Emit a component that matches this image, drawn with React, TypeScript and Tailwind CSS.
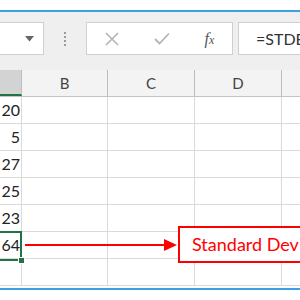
import React from "react";

const COLS = [
  { key: "A", w: "w-[22px]" },
  { key: "B", w: "w-[86px]" },
  { key: "C", w: "w-[87px]" },
  { key: "D", w: "w-[87px]" },
  { key: "E", w: "w-[87px]" },
];

const VALUES = ["20", "5", "27", "25", "23", "64", ""];

const FONT = { fontFamily: "Lato, 'Liberation Sans', sans-serif" };

const App = () => {
  return (
    <div className="relative w-[300px] h-[300px] overflow-hidden bg-white" style={FONT}>
      <div className="h-[10px] bg-white" />
      <div className="h-[2px] bg-[#3ba1e3]" />

      {/* formula toolbar */}
      <div className="h-[58px] bg-[#efefef] pt-[10px] flex">
        <div className="w-[44px] h-[33px] bg-white border border-l-0 border-[#cfcfcf] flex items-center justify-end pr-[9px]">
          <svg width="9" height="6" viewBox="0 0 9 6">
            <path d="M0 0 L9 0 L4.5 5.5 Z" fill="#666" />
          </svg>
        </div>
        <div className="w-[42px] h-[33px] flex flex-col items-center justify-center gap-[2px]">
          <span className="w-[2px] h-[2px] bg-[#9a9a9a]" />
          <span className="w-[2px] h-[2px] bg-[#9a9a9a]" />
          <span className="w-[2px] h-[2px] bg-[#9a9a9a]" />
          <span className="w-[2px] h-[2px] bg-[#9a9a9a]" />
        </div>
        <div className="w-[147px] h-[33px] bg-white border border-[#cfcfcf] flex items-center">
          <div className="w-[50px] flex justify-center">
            <svg width="14" height="14" viewBox="0 0 14 14">
              <path d="M1 1 L13 13 M13 1 L1 13" stroke="#b4b4b4" strokeWidth="1.6" />
            </svg>
          </div>
          <div className="w-[50px] flex justify-center">
            <svg width="16" height="13" viewBox="0 0 16 13">
              <path d="M1 7 L5.5 11.5 L15 1.5" stroke="#b4b4b4" strokeWidth="1.8" fill="none" />
            </svg>
          </div>
          <div className="w-[45px] flex justify-center">
            <span className="text-[16px] italic text-[#555] leading-none" style={{ fontFamily: "'Liberation Serif', serif" }}>
              f<span className="text-[12px]">x</span>
            </span>
          </div>
        </div>
        <div className="w-[5px]" />
        <div className="flex-1 h-[33px] bg-white border border-r-0 border-[#cfcfcf] flex items-center pl-[17px] text-[16px] text-[#333] whitespace-nowrap overflow-hidden">
          =STDEV.S(A1:A5)
        </div>
      </div>

      {/* column headers */}
      <div className="h-[27px] flex bg-[#f3f3f3] border-b border-[#c4c4c4]">
        {COLS.map((c) => (
          <div
            key={c.key}
            className={`${c.w} shrink-0 h-full flex items-center justify-center text-[15px] text-[#444] border-r border-[#bdbdbd] ${
              c.key === "A" ? "bg-[#d3d3d3] border-b-2 border-b-[#217346]" : ""
            }`}
          >
            {c.key === "A" ? "" : c.key}
          </div>
        ))}
      </div>

      {/* rows */}
      {VALUES.map((v, i) => (
        <div key={i} className="h-[27px] flex">
          {COLS.map((c) => (
            <div
              key={c.key}
              className={`${c.w} shrink-0 h-full border-r border-b border-[#dadada] flex items-center ${
                c.key === "A" ? "justify-end pr-[1px] text-[16px] text-[#222]" : ""
              }`}
            >
              {c.key === "A" ? v : ""}
            </div>
          ))}
        </div>
      ))}

      <div className="absolute left-0 top-[288px] w-full h-[2px] bg-[#3ba1e3]" />

      {/* selected cell */}
      <div className="absolute left-[-4px] top-[231px] w-[26px] h-[30px] border-2 border-[#217346]" />
      <div className="absolute left-[18px] top-[257px] w-[7px] h-[7px] bg-[#217346] border border-white" />

      {/* arrow */}
      <div className="absolute left-[25px] top-[244px] w-[145px] h-[2px] bg-[#f00]" />
      <svg className="absolute left-[164px] top-[239px]" width="13" height="12" viewBox="0 0 13 12">
        <path d="M0 0 L13 6 L0 12 Z" fill="#f00" />
      </svg>

      {/* label box */}
      <div className="absolute left-[178px] top-[226px] w-[180px] h-[37px] border-2 border-[#f00] flex items-center pl-[12px] text-[18px] text-[#f00] whitespace-nowrap bg-white">
        Standard Deviation
      </div>
    </div>
  );
};

export default App;
